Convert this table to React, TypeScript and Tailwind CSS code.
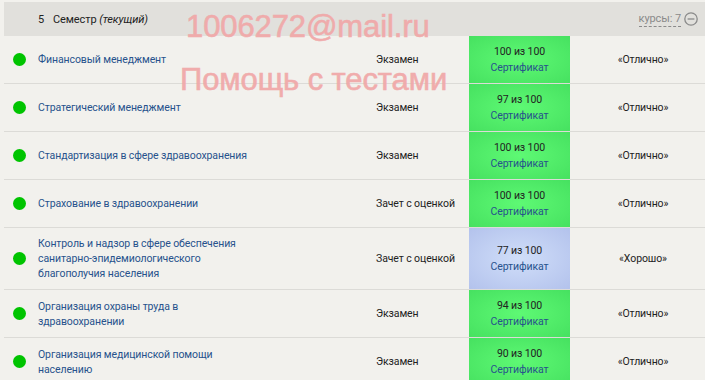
import { FC } from 'react';

interface Course {
  name: string[];
  kind: string;
  score: string;
  grade: string;
  good?: boolean;
}

const courses: Course[] = [
  { name: ['Финансовый менеджмент'], kind: 'Экзамен', score: '100 из 100', grade: '«Отлично»' },
  { name: ['Стратегический менеджмент'], kind: 'Экзамен', score: '97 из 100', grade: '«Отлично»' },
  { name: ['Стандартизация в сфере здравоохранения'], kind: 'Экзамен', score: '100 из 100', grade: '«Отлично»' },
  { name: ['Страхование в здравоохранении'], kind: 'Зачет с оценкой', score: '100 из 100', grade: '«Отлично»' },
  {
    name: ['Контроль и надзор в сфере обеспечения', 'санитарно-эпидемиологического', 'благополучия населения'],
    kind: 'Зачет с оценкой',
    score: '77 из 100',
    grade: '«Хорошо»',
    good: true,
  },
  { name: ['Организация охраны труда в', 'здравоохранении'], kind: 'Экзамен', score: '94 из 100', grade: '«Отлично»' },
  { name: ['Организация медицинской помощи', 'населению'], kind: 'Экзамен', score: '90 из 100', grade: '«Отлично»' },
];

const MinusCircle: FC = () => (
  <svg width="14" height="14" viewBox="0 0 14 14" fill="none">
    <circle cx="7" cy="7" r="6.2" stroke="#8a8a8a" strokeWidth="1.3" />
    <line x1="3.6" y1="7" x2="10.4" y2="7" stroke="#8a8a8a" strokeWidth="1.3" />
  </svg>
);

export default function App() {
  return (
    <div
      className="relative w-[705px] h-[380px] overflow-hidden bg-[#f2f1ed] text-[10.5px] leading-[15px] tracking-[-0.1px] text-[#222]"
      style={{ fontFamily: 'Roboto, "Open Sans", sans-serif' }}
    >
      <div className="ml-1 mt-0.5 w-[712px]">
        {/* Semester header */}
        <div className="h-[34px] bg-[#e1e0dc] flex items-center pl-[34px] pr-[18px] text-[11px]">
          <span className="w-[15px]">5</span>
          <span>
            Семестр <i>(текущий)</i>
          </span>
          <div className="ml-auto flex items-center gap-[3px] text-[#8a8a8a]">
            <span className="border-b border-dashed border-[#8a8a8a] leading-[14px]">курсы: 7</span>
            <MinusCircle />
          </div>
        </div>

        {/* Course rows */}
        {courses.map((c, i) => (
          <div
            key={i}
            className="grid grid-cols-[30px_338px_97px_101px_146px] min-h-[48px] border-b border-[#dcdbd7]"
          >
            <div className="flex items-center justify-center pl-[1px]">
              <span className="block w-[13px] h-[13px] rounded-full bg-[#00c400]" />
            </div>
            <div className="flex flex-col justify-center py-2 pl-1 text-[#27528c]">
              {c.name.map((l, j) => (
                <span key={j}>{l}</span>
              ))}
            </div>
            <div className="flex items-center pl-1">{c.kind}</div>
            <div
              className={`flex flex-col items-center justify-center leading-[16px] ${
                c.good
                  ? 'bg-[radial-gradient(ellipse_at_center,#d0def9_0%,#b3c2ec_100%)]'
                  : 'bg-[radial-gradient(ellipse_at_center,#5ef974_0%,#46e160_100%)]'
              }`}
            >
              <span>{c.score}</span>
              <span className="text-[#27528c]">Сертификат</span>
            </div>
            <div className="flex items-center justify-center">{c.grade}</div>
          </div>
        ))}
      </div>

      {/* Watermark overlay */}
      <div
        className="absolute inset-0 text-[31px] leading-[36px] text-[#f0a9a9] [-webkit-text-stroke:0.6px_#f0a9a9] opacity-95 pointer-events-none"
        style={{ fontFamily: '"Liberation Sans", Arial, sans-serif' }}
      >
        <span className="absolute left-[186px] top-[9px]">1006272@mail.ru</span>
        <span className="absolute left-[180px] top-[62px]">Помощь с тестами</span>
      </div>
    </div>
  );
}
